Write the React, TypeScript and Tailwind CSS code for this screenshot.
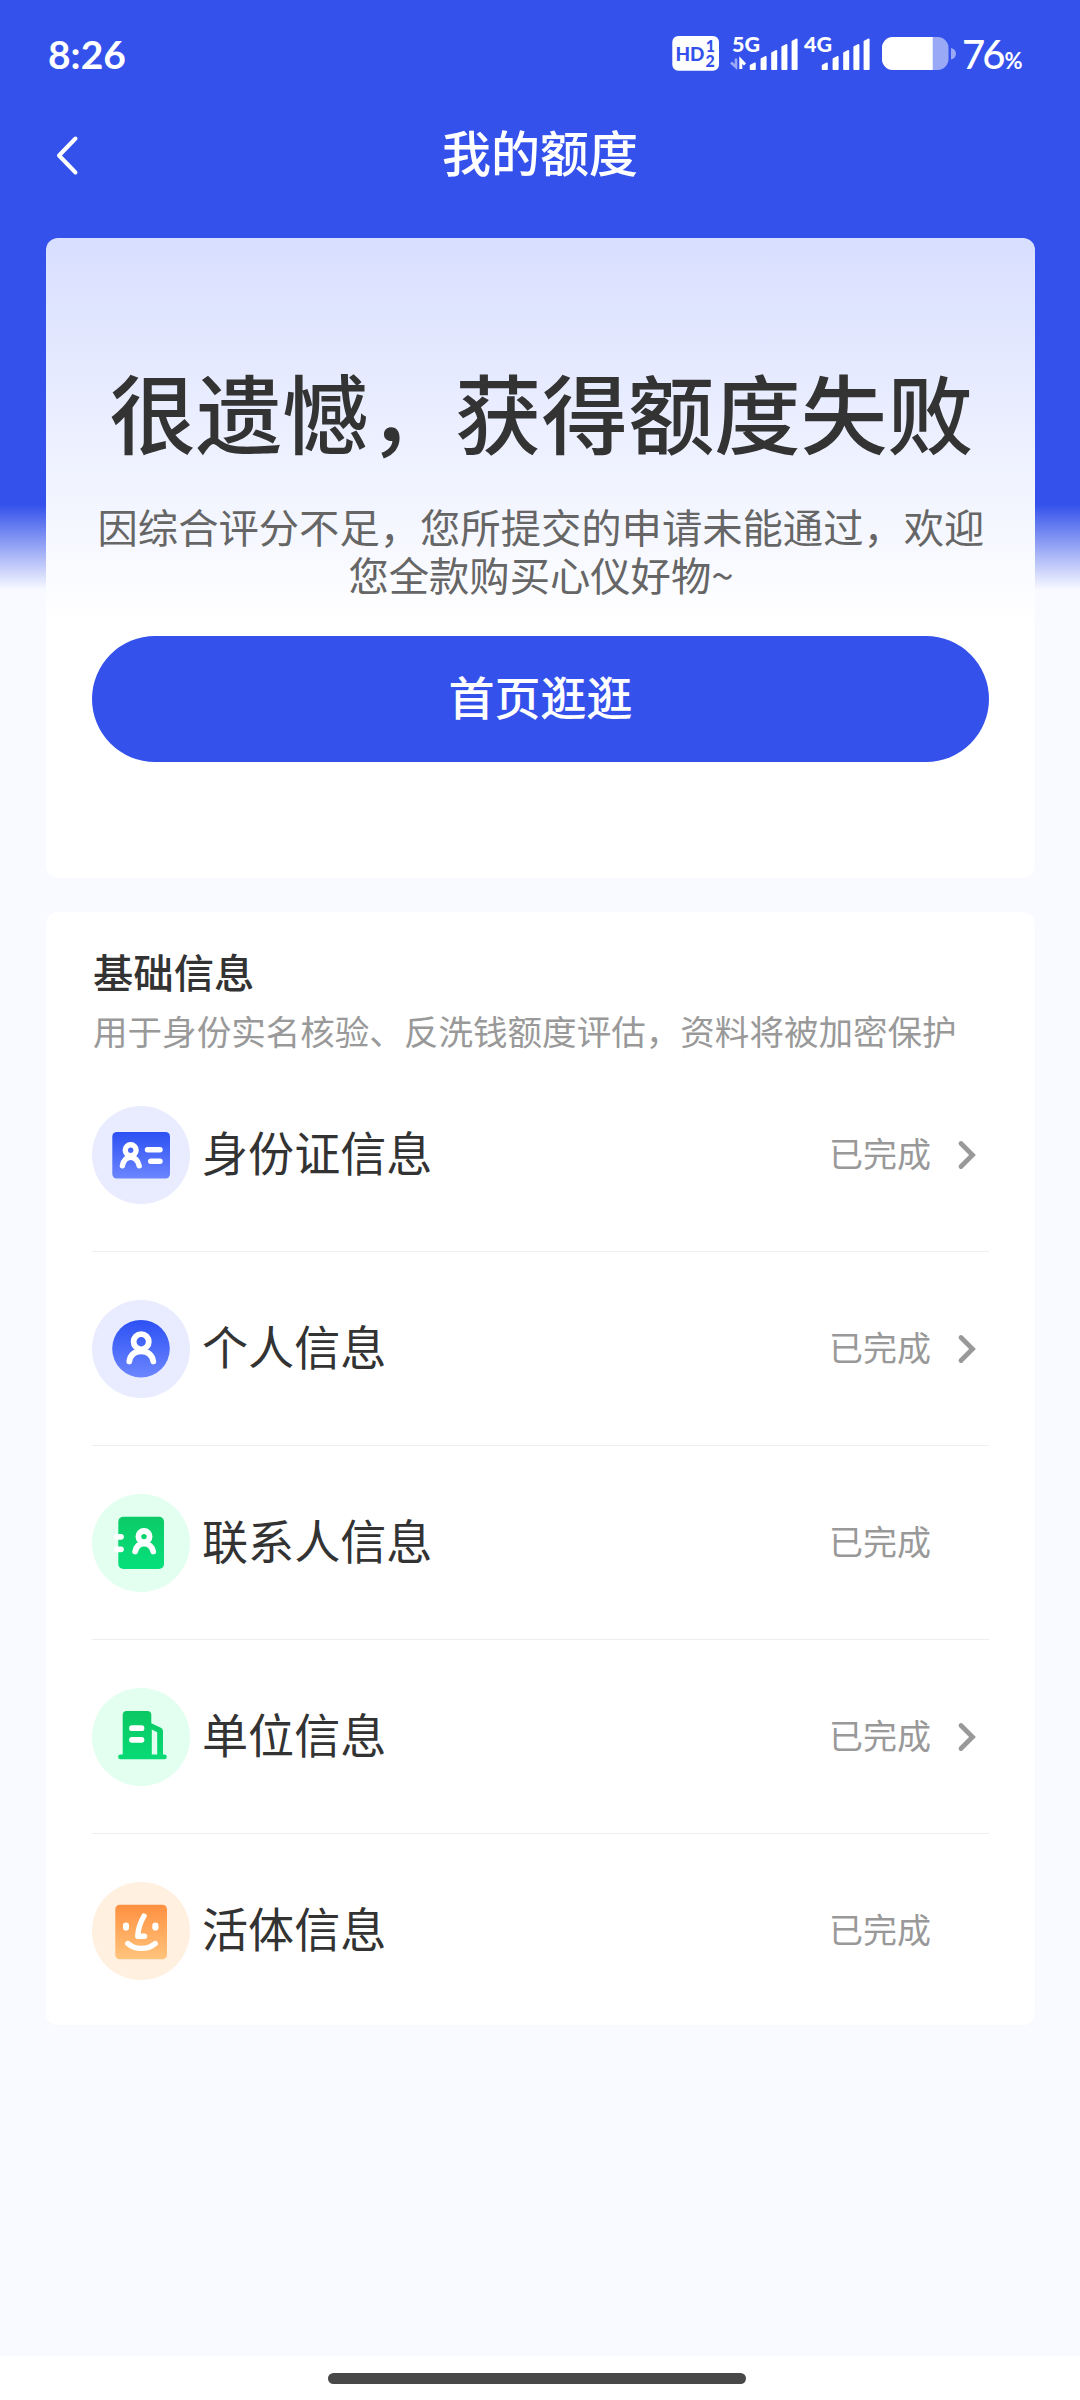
import React from "react";

type IconName = "idCard" | "person" | "contact" | "company" | "face";

interface InfoItem {
  id: number;
  icon: IconName;
  label: string;
  status: string;
  clickable: boolean;
}

const infoItems: InfoItem[] = [
  { id: 1, icon: "idCard", label: "身份证信息", status: "已完成", clickable: true },
  { id: 2, icon: "person", label: "个人信息", status: "已完成", clickable: true },
  { id: 3, icon: "contact", label: "联系人信息", status: "已完成", clickable: false },
  { id: 4, icon: "company", label: "单位信息", status: "已完成", clickable: true },
  { id: 5, icon: "face", label: "活体信息", status: "已完成", clickable: false },
];

const IdCardIcon = () => (
  <>
    <circle cx="49" cy="49" r="49" fill="#E9ECFE" />
    <rect x="20.3" y="26" width="57.7" height="46.5" rx="4.5" fill="url(#blueFill)" />
    <g fill="none" stroke="#fff" strokeWidth="5.4" strokeLinecap="round">
      <circle cx="38.7" cy="44.2" r="5.4" />
      <path d="M30.400 59.800C31.600 54 34.500 51.200 38.700 51.200S45.800 54 47.200 59.800" />
      <path d="M55.500 43.800H68M58.700 55.300H68" />
    </g>
  </>
);

const PersonIcon = () => (
  <>
    <circle cx="49" cy="49" r="49" fill="#E9ECFE" />
    <circle cx="49" cy="48.7" r="28.8" fill="url(#blueFill)" />
    <g fill="none" stroke="#fff" strokeWidth="5.8" strokeLinecap="round">
      <circle cx="49.2" cy="41.7" r="7.6" />
      <path d="M37.3 61.5C38.3 55 42.5 51.3 49.2 51.3S60.2 55 61.3 61.5" />
    </g>
  </>
);

const ContactIcon = () => (
  <>
    <circle cx="49" cy="49" r="49" fill="#E2FFF0" />
    <rect x="26.3" y="22.7" width="45.7" height="52.3" rx="5" fill="url(#greenFill)" />
    <g fill="none" stroke="#fff" strokeWidth="5.8" strokeLinecap="round">
      <path d="M24.5 42.8H29M24.5 55.3H29" />
      <circle cx="52" cy="42.6" r="5.6" />
      <path d="M43.2 57.5C44.2 52.5 47.3 49.6 52 49.600S60.2 52.5 61.200 57.5" />
    </g>
  </>
);

const CompanyIcon = () => (
  <>
    <circle cx="49" cy="49" r="49" fill="#E2FFF0" />
    <path
      d="M30.7 27a4 4 0 0 1 4-4h20.6a4 4 0 0 1 4 4v8.2l9.6 4.6a3.6 3.6 0 0 1 2.1 3.2V66.5h1.4a2.4 2.4 0 0 1 0 4.8H28.5a2.4 2.4 0 0 1 0-4.8h2.2z"
      fill="url(#companyFill)"
    />
    <path d="M59.8 41.5l5.4 2.7V66.5h-5.4z" fill="#E2FFF0" />
    <path d="M40 40.2H49.5M40 51.8H49.5" stroke="#fff" strokeWidth="5.8" strokeLinecap="round" />
  </>
);

const FaceIcon = () => (
  <>
    <circle cx="49" cy="49" r="49" fill="#FFF0E0" />
    <rect x="23.3" y="22.7" width="51.7" height="54.6" rx="4.5" fill="url(#orangeFill)" />
    <g fill="none" stroke="#fff" strokeWidth="5.4" strokeLinecap="round" strokeLinejoin="round">
      <path d="M34 43.5V45.5M63.4 43.5V45.500" strokeWidth="6.200" />
      <path d="M52 34C48.5 40 46 47 45.8 54.3H52.5" />
      <path d="M35.800 61.500C43 68 56 68 63.200 61.500" />
    </g>
  </>
);

const icons: Record<IconName, React.FC> = {
  idCard: IdCardIcon,
  person: PersonIcon,
  contact: ContactIcon,
  company: CompanyIcon,
  face: FaceIcon,
};

// Gradients shared by all list icons
const IconGradients = () => (
  <svg width="0" height="0" className="absolute">
    <defs>
      <linearGradient id="blueFill" x1="0" y1="0" x2="0" y2="1">
        <stop offset="0" stopColor="#2C50F3" />
        <stop offset="1" stopColor="#6C86FF" />
      </linearGradient>
      <linearGradient id="greenFill" x1="0" y1="0" x2="0" y2="1">
        <stop offset="0" stopColor="#0CCB66" />
        <stop offset="1" stopColor="#05E07C" />
      </linearGradient>
      <linearGradient id="companyFill" x1="0" y1="0" x2="0" y2="1">
        <stop offset="0" stopColor="#0AC861" />
        <stop offset="1" stopColor="#08DA76" />
      </linearGradient>
      <linearGradient id="orangeFill" x1="0" y1="0" x2="0" y2="1">
        <stop offset="0" stopColor="#FF9040" />
        <stop offset="1" stopColor="#FFC47C" />
      </linearGradient>
    </defs>
  </svg>
);

const signalBars = [
  { x: 0, h: 7.5 },
  { x: 10.8, h: 14 },
  { x: 21.4, h: 20 },
  { x: 31.6, h: 26 },
  { x: 41.8, h: 31.5 },
];

const SignalBars = ({ x }: { x: number }) => (
  <g fill="#fff" stroke="#fff" strokeWidth="1.6" strokeLinejoin="round">
    {signalBars.map((bar) => (
      <path
        key={bar.x}
        d={`M${x + bar.x + 0.8} ${50 - bar.h + 3}l4.4 -2.2V49.2h-4.4z`}
      />
    ))}
  </g>
);

const StatusBar = () => (
  <div className="flex h-[108px] items-start justify-between pl-12 text-white">
    <span className="mt-[30px] font-['Lato'] text-[39px] leading-[48px] font-bold">8:26</span>
    <div className="flex w-[430px] pt-5">
      <svg width="310" height="70" viewBox="0 0 310 70" className="shrink-0 font-['Lato']">
        <rect x="22.3" y="16" width="46.7" height="34.7" rx="6" fill="#fff" />
        <g fill="#3452EB" fontWeight="900">
          <text x="25.5" y="40.8" fontSize="19.5" textLength="29" lengthAdjust="spacingAndGlyphs">HD</text>
          <text x="55.8" y="32.4" fontSize="16">1</text>
          <text x="55.6" y="46.6" fontSize="16">2</text>
        </g>
        <g fill="#fff" fontWeight="900" fontSize="21">
          <text x="82" y="31.6" textLength="28" lengthAdjust="spacingAndGlyphs">5G</text>
          <text x="154" y="31.6" textLength="28" lengthAdjust="spacingAndGlyphs">4G</text>
        </g>
        <path d="M86 38.5V47l-5-4.5" fill="none" stroke="#fff" strokeOpacity="0.5" strokeWidth="2.6" />
        <path d="M90.8 49V40l4.2 4.5" fill="none" stroke="#fff" strokeWidth="3" />
        <SignalBars x={99.8} />
        <SignalBars x={171.8} />
        <rect x="232" y="17" width="66.5" height="33" rx="11" fill="#fff" fillOpacity="0.5" />
        <path d="M282.7 17H243a11 11 0 0 0-11 11v11a11 11 0 0 0 11 11h39.7z" fill="#fff" />
        <path d="M301 28c3 .6 5 2.8 5 5.7s-2 5-5 5.7z" fill="#fff" fillOpacity="0.5" />
      </svg>
      <div className="mt-[10px] flex items-baseline font-['Lato'] leading-[48px]">
        <span className="ml-[2px] text-[40px] font-medium tracking-[-3px]">76</span>
        <span className="ml-[2px] text-[22px] font-bold">%</span>
      </div>
    </div>
  </div>
);

const NavBar = () => (
  <div className="grid h-[130px] grid-cols-[120px_1fr_120px] items-start text-white">
    <svg width="24" height="42" viewBox="0 0 24 42" className="mt-[27px] ml-[55px]">
      <path
        d="M20.5 3.5L4 20.5L20.5 37.5"
        fill="none"
        stroke="#fff"
        strokeWidth="4"
        strokeLinecap="round"
        strokeLinejoin="round"
      />
    </svg>
    <h1 className="mt-2 text-center text-[49px] leading-[70px] font-medium">我的额度</h1>
  </div>
);

const ResultCard = () => (
  <section className="flex h-[640px] flex-col items-center rounded-xl bg-white bg-[linear-gradient(180deg,#D8DFFF_0px,#FFFFFF_385px)] px-[46px]">
    <h2 className="mt-[113px] ml-[2px] text-[86.4px] leading-[120px] font-medium whitespace-nowrap text-[#333333]">
      很遗憾，获得额度失败
    </h2>
    <p className="mt-[31px] ml-px text-center text-[40.32px] leading-12 whitespace-nowrap text-[#666666]">
      因综合评分不足，您所提交的申请未能通过，欢迎
      <br />
      您全款购买心仪好物~
    </p>
    <button className="mt-[38px] h-[126px] w-full shrink-0 rounded-full bg-[#3452EB] pb-2 text-[46px] leading-[118px] font-medium text-white">
      首页逛逛
    </button>
  </section>
);

const InfoRow = ({ item, last }: { item: InfoItem; last: boolean }) => {
  const Icon = icons[item.icon];

  return (
    <li
      className={`flex h-[194px] items-center ${last ? "" : "border-b border-[#EEEEEE]"}`}
    >
      <svg width="98" height="98" viewBox="0 0 98 98" className="shrink-0">
        <Icon />
      </svg>
      <span className="-mt-2 ml-3 flex-1 text-[46.08px] leading-[60px] text-[#333333]">
        {item.label}
      </span>
      <span className="-mt-1 text-[34px] leading-[48px] text-[#999999]">{item.status}</span>
      <span className="flex w-[58px] justify-start pl-[26px]">
        {item.clickable && (
          <svg width="22" height="32" viewBox="0 0 22 32">
            <path
              d="M4 4.5L15.5 16L4 27.5"
              fill="none"
              stroke="#999999"
              strokeWidth="4.8"
              strokeLinecap="round"
            />
          </svg>
        )}
      </span>
    </li>
  );
};

const InfoCard = () => (
  <section className="mt-[34px] h-[1113px] rounded-xl bg-white px-[46px] pt-[30px]">
    <h3 className="ml-px text-[40.32px] leading-[58px] font-medium text-[#333333]">基础信息</h3>
    <p className="ml-px pt-0.5 text-[34.56px] leading-[56px] whitespace-nowrap text-[#999999]">
      用于身份实名核验、反洗钱额度评估，资料将被加密保护
    </p>
    <ul>
      {infoItems.map((item, index) => (
        <InfoRow key={item.id} item={item} last={index === infoItems.length - 1} />
      ))}
    </ul>
  </section>
);

const App: React.FC = () => {
  return (
    <div className="flex h-[2400px] w-[1080px] flex-col overflow-hidden bg-[#F9FAFF] bg-[linear-gradient(180deg,#3452EB_505px,#F9FAFF_590px)] font-['Noto_Sans_CJK_SC',sans-serif]">
      <IconGradients />
      <StatusBar />
      <NavBar />
      <main className="flex-1 pr-[45px] pl-[46px]">
        <ResultCard />
        <InfoCard />
      </main>
      {/* Gesture bar */}
      <footer className="h-11 bg-white pt-[17px]">
        <div className="ml-[328px] h-[11px] w-[418px] rounded-full bg-[#484848]" />
      </footer>
    </div>
  );
};

export default App;
